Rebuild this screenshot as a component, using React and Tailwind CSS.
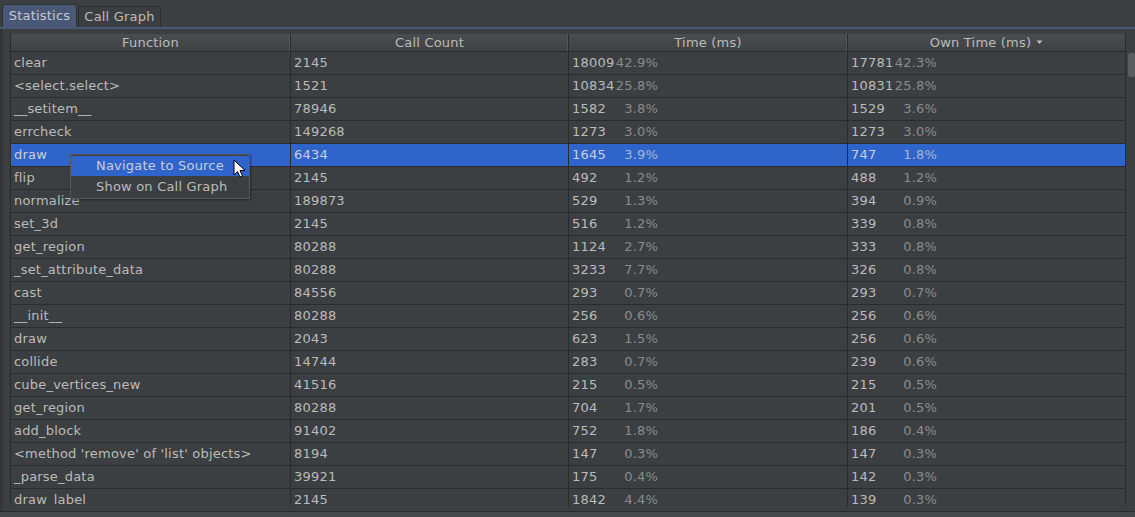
import React from "react";

const rows = [
  ["clear", "2145", "18009", "42.9%", "17781", "42.3%"],
  ["<select.select>", "1521", "10834", "25.8%", "10831", "25.8%"],
  ["__setitem__", "78946", "1582", "3.8%", "1529", "3.6%"],
  ["errcheck", "149268", "1273", "3.0%", "1273", "3.0%"],
  ["draw", "6434", "1645", "3.9%", "747", "1.8%"],
  ["flip", "2145", "492", "1.2%", "488", "1.2%"],
  ["normalize", "189873", "529", "1.3%", "394", "0.9%"],
  ["set_3d", "2145", "516", "1.2%", "339", "0.8%"],
  ["get_region", "80288", "1124", "2.7%", "333", "0.8%"],
  ["_set_attribute_data", "80288", "3233", "7.7%", "326", "0.8%"],
  ["cast", "84556", "293", "0.7%", "293", "0.7%"],
  ["__init__", "80288", "256", "0.6%", "256", "0.6%"],
  ["draw", "2043", "623", "1.5%", "256", "0.6%"],
  ["collide", "14744", "283", "0.7%", "239", "0.6%"],
  ["cube_vertices_new", "41516", "215", "0.5%", "215", "0.5%"],
  ["get_region", "80288", "704", "1.7%", "201", "0.5%"],
  ["add_block", "91402", "752", "1.8%", "186", "0.4%"],
  ["<method 'remove' of 'list' objects>", "8194", "147", "0.3%", "147", "0.3%"],
  ["_parse_data", "39921", "175", "0.4%", "142", "0.3%"],
  ["draw_label", "2145", "1842", "4.4%", "139", "0.3%"],
];

const cols = "grid grid-cols-[280px_278px_279px_278px]";

function Pct({ n, p, selected }) {
  return (
    <div className="flex w-[86px] justify-between whitespace-nowrap">
      <span>{n}</span>
      <span className={selected ? "text-[#a9b6cf]" : "text-[#8a8c8e]"}>{p}</span>
    </div>
  );
}

export default function App() {
  return (
    <div
      className="w-[1135px] h-[517px] bg-[#3c3f41] text-[#bbbbbb] overflow-hidden flex flex-col relative tracking-[0.2px]"
      style={{ fontFamily: '"DejaVu Sans", sans-serif', fontSize: "13px" }}
    >
      {/* Tabs */}
      <div className="h-[27px] flex items-end pl-[2px] gap-[1px] shrink-0">
        <div className="h-[23px] w-[75px] bg-[#4a5877] border border-b-0 border-[#2f3133] rounded-t-[3px] flex items-center justify-center text-[#c4c8cf]">
          Statistics
        </div>
        <div className="h-[21px] w-[83px] bg-[#3c3f41] border border-b-0 border-[#2b2d2f] rounded-t-[3px] flex items-center justify-center">
          Call Graph
        </div>
      </div>
      <div className="h-[2px] bg-[#4a5878] shrink-0" />
      {/* Panel */}
      <div className="flex-1 flex border-l-[3px] border-[#333537] min-h-0">
        <div className="flex-1 flex flex-col pt-[5px] pl-[7px] min-h-0">
          <div className="h-[472px] flex overflow-hidden">
            <div className="flex flex-col w-[1115px]">
              {/* header */}
              <div className={`${cols} h-[18px] bg-gradient-to-b from-[#4a4d4f] to-[#3f4244] border-l border-[#2b2b2b] border-b border-b-[#2b2b2b] shrink-0`}>
                {["Function", "Call Count", "Time (ms)", "Own Time (ms)"].map((h, i) => (
                  <div
                    key={h}
                    className={`flex items-center justify-center leading-none ${i < 3 ? "border-r border-[#2b2b2b] shadow-[inset_-1px_0_0_#55585a]" : ""}`}
                  >
                    {h}
                    {i === 3 && (
                      <svg width="8" height="5" viewBox="0 0 8 5" className="ml-[5px]">
                        <path d="M0.5 0.5 H6.5 L3.5 4 Z" fill="#bbbbbb" />
                      </svg>
                    )}
                  </div>
                ))}
              </div>
              {rows.map((r, idx) => {
                const sel = idx === 4;
                return (
                  <div
                    key={idx}
                    className={`${cols} h-[23px] shrink-0 border-l border-b border-[#2b2b2b] ${sel ? "bg-[#2f65ca] text-[#c8cedb]" : ""}`}
                  >
                    <div className="border-r border-[#2b2b2b] pl-[3px] flex items-center whitespace-nowrap overflow-hidden">
                      {r[0]}
                    </div>
                    <div className="border-r border-[#2b2b2b] pl-[3px] flex items-center">{r[1]}</div>
                    <div className="border-r border-[#2b2b2b] pl-[3px] flex items-center">
                      <Pct n={r[2]} p={r[3]} selected={sel} />
                    </div>
                    <div className="pl-[3px] flex items-center">
                      <Pct n={r[4]} p={r[5]} selected={sel} />
                    </div>
                  </div>
                );
              })}
            </div>
            {/* scrollbar */}
            <div className="w-[11px] border-l border-[#2b2b2b] pt-[18px] shrink-0">
              <div className="ml-[2px] mt-[1px] w-[7px] h-[24px] rounded-[2px] bg-[#5a5d5f]" />
            </div>
          </div>
        </div>
      </div>
      <div className="h-[1px] bg-[#2b2b2b] shrink-0" />
      <div className="h-[5px] bg-[#45484a] shrink-0" />

      {/* context menu */}
      <div className="absolute left-[70px] top-[154px] w-[180px] bg-[#3c3f41] border border-[#555859] py-[1px] shadow-[1px_1px_2px_rgba(0,0,0,0.4)]">
        <div className="h-[20px] bg-[#2f65ca] pl-[25px] flex items-center text-[#c8cedb]">Navigate to Source</div>
        <div className="h-[21px] pl-[25px] flex items-center">Show on Call Graph</div>
      </div>
      {/* cursor */}
      <svg className="absolute left-[233px] top-[159px]" width="14" height="20" viewBox="0 0 14 20">
        <path d="M1 1 L1 16 L4.5 12.5 L7 18 L9.5 17 L7 11.5 L12 11.5 Z" fill="#ffffff" stroke="#000000" strokeWidth="1" strokeLinejoin="round" />
      </svg>
    </div>
  );
}
